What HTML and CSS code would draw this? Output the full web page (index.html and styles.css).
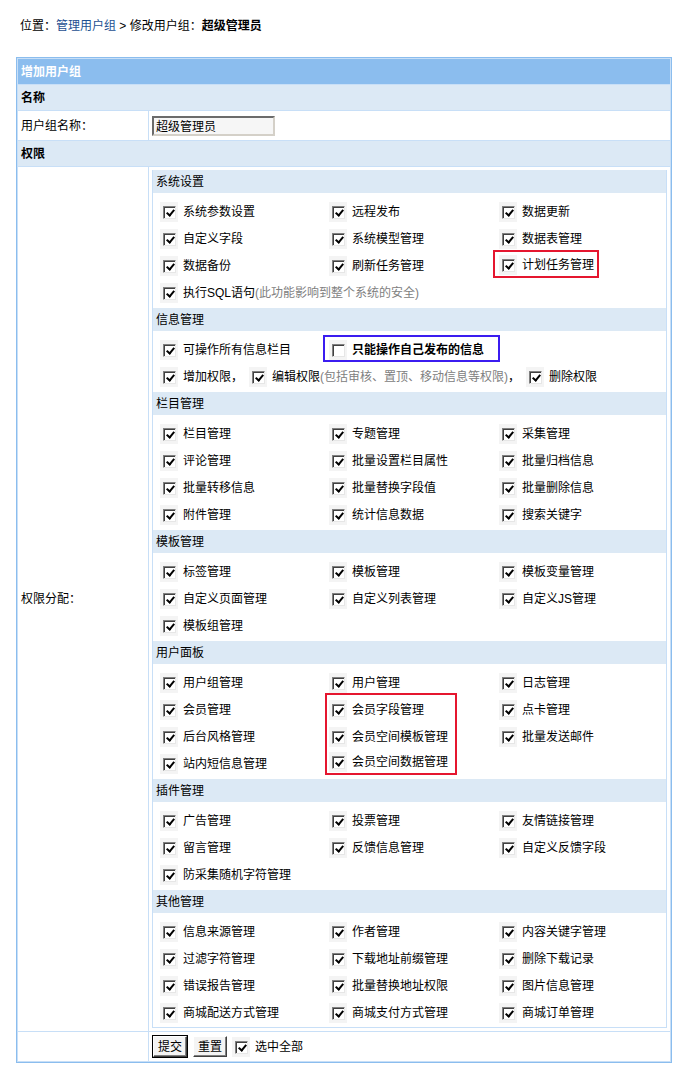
FILE: index.html
```html
<!DOCTYPE html>
<html lang="zh-CN">
<head>
    <meta charset="UTF-8">
    <title>修改用户组</title>
    <link rel="stylesheet" href="styles.css">
</head>
<body>
    <div class="position">位置：<a href="#">管理用户组</a> &gt; 修改用户组：<b>超级管理员</b></div>

    <form class="group-form">
    <table class="table-border">
        <colgroup><col class="col-label"><col></colgroup>
        <tr><th colspan="2" class="title">增加用户组</th></tr>
        <tr><td colspan="2" class="sub-title">名称</td></tr>
        <tr class="row-name">
            <td>用户组名称：</td>
            <td><input type="text" class="text-input" value="超级管理员"></td>
        </tr>
        <tr><td colspan="2" class="sub-title">权限</td></tr>
        <tr class="row-purview">
            <td>权限分配：</td>
            <td class="purview-cell">
                <div class="purview">

                    <!-- 系统设置 -->
                    <div class="purview-head">系统设置</div>
                    <div class="purview-body">
                        <label class="opt"><span class="cb on"></span>系统参数设置</label>
                        <label class="opt"><span class="cb on"></span>远程发布</label>
                        <label class="opt"><span class="cb on"></span>数据更新</label>
                        <label class="opt"><span class="cb on"></span>自定义字段</label>
                        <label class="opt"><span class="cb on"></span>系统模型管理</label>
                        <label class="opt"><span class="cb on"></span>数据表管理</label>
                        <label class="opt"><span class="cb on"></span>数据备份</label>
                        <label class="opt"><span class="cb on"></span>刷新任务管理</label>
                        <label class="opt flag flag-one"><span class="cb on"></span>计划任务管理</label>
                        <label class="opt wide"><span class="cb on"></span>执行SQL语句<span class="note">(此功能影响到整个系统的安全)</span></label>
                    </div>

                    <!-- 信息管理 -->
                    <div class="purview-head">信息管理</div>
                    <div class="purview-body">
                        <label class="opt"><span class="cb on"></span>可操作所有信息栏目</label>
                        <label class="opt flag-blue"><span class="cb"></span><b>只能操作自己发布的信息</b></label>
                        <div class="opt wide">
                            <span class="cb on"></span>增加权限，<span class="cb on next"></span>编辑权限<span class="note">(包括审核、置顶、移动信息等权限)</span>，<span class="cb on next"></span>删除权限
                        </div>
                    </div>

                    <!-- 栏目管理 -->
                    <div class="purview-head">栏目管理</div>
                    <div class="purview-body">
                        <label class="opt"><span class="cb on"></span>栏目管理</label>
                        <label class="opt"><span class="cb on"></span>专题管理</label>
                        <label class="opt"><span class="cb on"></span>采集管理</label>
                        <label class="opt"><span class="cb on"></span>评论管理</label>
                        <label class="opt"><span class="cb on"></span>批量设置栏目属性</label>
                        <label class="opt"><span class="cb on"></span>批量归档信息</label>
                        <label class="opt"><span class="cb on"></span>批量转移信息</label>
                        <label class="opt"><span class="cb on"></span>批量替换字段值</label>
                        <label class="opt"><span class="cb on"></span>批量删除信息</label>
                        <label class="opt"><span class="cb on"></span>附件管理</label>
                        <label class="opt"><span class="cb on"></span>统计信息数据</label>
                        <label class="opt"><span class="cb on"></span>搜索关键字</label>
                    </div>

                    <!-- 模板管理 -->
                    <div class="purview-head">模板管理</div>
                    <div class="purview-body">
                        <label class="opt"><span class="cb on"></span>标签管理</label>
                        <label class="opt"><span class="cb on"></span>模板管理</label>
                        <label class="opt"><span class="cb on"></span>模板变量管理</label>
                        <label class="opt"><span class="cb on"></span>自定义页面管理</label>
                        <label class="opt"><span class="cb on"></span>自定义列表管理</label>
                        <label class="opt"><span class="cb on"></span>自定义JS管理</label>
                        <label class="opt"><span class="cb on"></span>模板组管理</label>
                    </div>

                    <!-- 用户面板 -->
                    <div class="purview-head">用户面板</div>
                    <div class="purview-body">
                        <label class="opt"><span class="cb on"></span>用户组管理</label>
                        <label class="opt"><span class="cb on"></span>用户管理</label>
                        <label class="opt"><span class="cb on"></span>日志管理</label>
                        <label class="opt"><span class="cb on"></span>会员管理</label>
                        <label class="opt flag flag-top"><span class="cb on"></span>会员字段管理</label>
                        <label class="opt"><span class="cb on"></span>点卡管理</label>
                        <label class="opt"><span class="cb on"></span>后台风格管理</label>
                        <label class="opt flag flag-mid"><span class="cb on"></span>会员空间模板管理</label>
                        <label class="opt"><span class="cb on"></span>批量发送邮件</label>
                        <label class="opt"><span class="cb on"></span>站内短信息管理</label>
                        <label class="opt flag flag-bot"><span class="cb on"></span>会员空间数据管理</label>
                    </div>

                    <!-- 插件管理 -->
                    <div class="purview-head">插件管理</div>
                    <div class="purview-body">
                        <label class="opt"><span class="cb on"></span>广告管理</label>
                        <label class="opt"><span class="cb on"></span>投票管理</label>
                        <label class="opt"><span class="cb on"></span>友情链接管理</label>
                        <label class="opt"><span class="cb on"></span>留言管理</label>
                        <label class="opt"><span class="cb on"></span>反馈信息管理</label>
                        <label class="opt"><span class="cb on"></span>自定义反馈字段</label>
                        <label class="opt"><span class="cb on"></span>防采集随机字符管理</label>
                    </div>

                    <!-- 其他管理 -->
                    <div class="purview-head">其他管理</div>
                    <div class="purview-body last">
                        <label class="opt"><span class="cb on"></span>信息来源管理</label>
                        <label class="opt"><span class="cb on"></span>作者管理</label>
                        <label class="opt"><span class="cb on"></span>内容关键字管理</label>
                        <label class="opt"><span class="cb on"></span>过滤字符管理</label>
                        <label class="opt"><span class="cb on"></span>下载地址前缀管理</label>
                        <label class="opt"><span class="cb on"></span>删除下载记录</label>
                        <label class="opt"><span class="cb on"></span>错误报告管理</label>
                        <label class="opt"><span class="cb on"></span>批量替换地址权限</label>
                        <label class="opt"><span class="cb on"></span>图片信息管理</label>
                        <label class="opt"><span class="cb on"></span>商城配送方式管理</label>
                        <label class="opt"><span class="cb on"></span>商城支付方式管理</label>
                        <label class="opt"><span class="cb on"></span>商城订单管理</label>
                    </div>

                </div>
            </td>
        </tr>
        <tr class="row-submit">
            <td></td>
            <td>
                <div class="actions">
                    <button type="button" class="btn btn-default">提交</button>
                    <button type="button" class="btn">重置</button>
                    <label class="opt"><span class="cb on"></span>选中全部</label>
                </div>
            </td>
        </tr>
    </table>
    </form>
</body>
</html>
```

FILE: styles.css
```css
body {
    margin: 0;
    font-family: "Liberation Sans", "Noto Sans CJK SC", sans-serif;
    font-size: 12px;
    line-height: 16px;
    color: #000;
    background: #fff;
}

/* Breadcrumb */
.position {
    padding: 18px 0 0 20px;
    height: 17px;
}

.position a {
    color: #1d4f91;
    text-decoration: none;
}

.group-form {
    margin: 22px 0 0 16px;
}

/* Main form table */
.table-border {
    width: 656px;
    table-layout: fixed;
    border: 1px solid #8bbdee;
    border-spacing: 1px;
    background: #c8dff7;
}

.col-label {
    width: 130px;
}

.table-border td,
.table-border th {
    padding: 0 3px;
    background: #fff;
    text-align: left;
    vertical-align: middle;
}

.table-border .title {
    height: 25px;
    background: #8bbdee;
    color: #fff;
    font-weight: bold;
}

.table-border .sub-title {
    height: 25px;
    background: #dce9f5;
    font-weight: bold;
}

.row-name td {
    height: 29px;
}

.text-input {
    box-sizing: border-box;
    width: 123px;
    height: 20px;
    margin: 0;
    padding: 1px 2px;
    border: 2px solid;
    border-color: #6b6b6b #d4d0c8 #d4d0c8 #6b6b6b;
    background: #f6f6f6;
    font: inherit;
    color: #000;
}

.purview-cell {
    padding: 3px !important;
}

/* Permission groups */
.purview {
    border: 1px solid #c8dff7;
    border-top: none;
}

.purview-head {
    height: 22px;
    padding: 1px 0 0 3px;
    line-height: 23px;
    background: #dce9f5;
}

.purview-body {
    display: grid;
    grid-template-columns: 169px 170px 1fr;
    grid-auto-rows: 27px;
    padding: 4px 0 3px 7px;
    background: #fff;
}

.purview-body.last {
    padding-bottom: 2px;
}

.opt {
    box-sizing: border-box;
    display: flex;
    align-items: center;
    padding-top: 2px;
    white-space: nowrap;
}

.wide {
    grid-column: 1 / -1;
}

.note {
    color: #808080;
}

/* Classic checkbox */
.cb {
    position: relative;
    flex: none;
    width: 18px;
    height: 20px;
    margin-right: 5px;
    background: #f4f4f4;
}

.cb::before {
    content: "";
    position: absolute;
    left: 3px;
    top: 4px;
    width: 11px;
    height: 11px;
    border: 1px solid;
    border-color: #808080 #e6e6e6 #e6e6e6 #808080;
    box-shadow: inset 1px 1px 0 #404040;
    background: #fff;
}

.cb.on::after {
    content: "";
    position: absolute;
    left: 8px;
    top: 6px;
    width: 3px;
    height: 6px;
    border: solid #000;
    border-width: 0 2px 2px 0;
    transform: rotate(40deg);
}

.cb.next {
    margin-left: 6px;
}

/* Highlighted options */
.flag {
    justify-self: start;
    border: 0 solid #e5162f;
}

.flag-one {
    width: 106px;
    height: 28px;
    margin: -1px 0 0 -6px;
    padding-left: 4px;
    border-width: 2px;
}

.flag-top,
.flag-mid,
.flag-bot {
    width: 132px;
    margin-left: -4px;
    padding-left: 2px;
    border-left-width: 2px;
    border-right-width: 2px;
}

.flag-top {
    border-top-width: 2px;
    height: 29px;
    margin-top: -2px;
}

.flag-bot {
    border-bottom-width: 2px;
    height: 26px;
}

.flag-blue {
    justify-self: start;
    width: 177px;
    margin-left: -6px;
    padding-left: 4px;
    border: 2px solid #3b1cf0;
}

/* Submit row */
.row-submit td {
    height: 29px;
}

.actions {
    display: flex;
    align-items: center;
}

.actions .opt {
    padding-top: 0;
}

.btn {
    box-sizing: border-box;
    height: 21px;
    margin: 0 5px 0 1px;
    padding: 0 4px;
    border: 1px solid;
    border-color: #fff #404040 #404040 #fff;
    box-shadow: inset -1px -1px 0 #808080;
    background: #f4f4f4;
    font: inherit;
    color: #000;
}

.btn-default {
    outline: 1px solid #000;
}
```
